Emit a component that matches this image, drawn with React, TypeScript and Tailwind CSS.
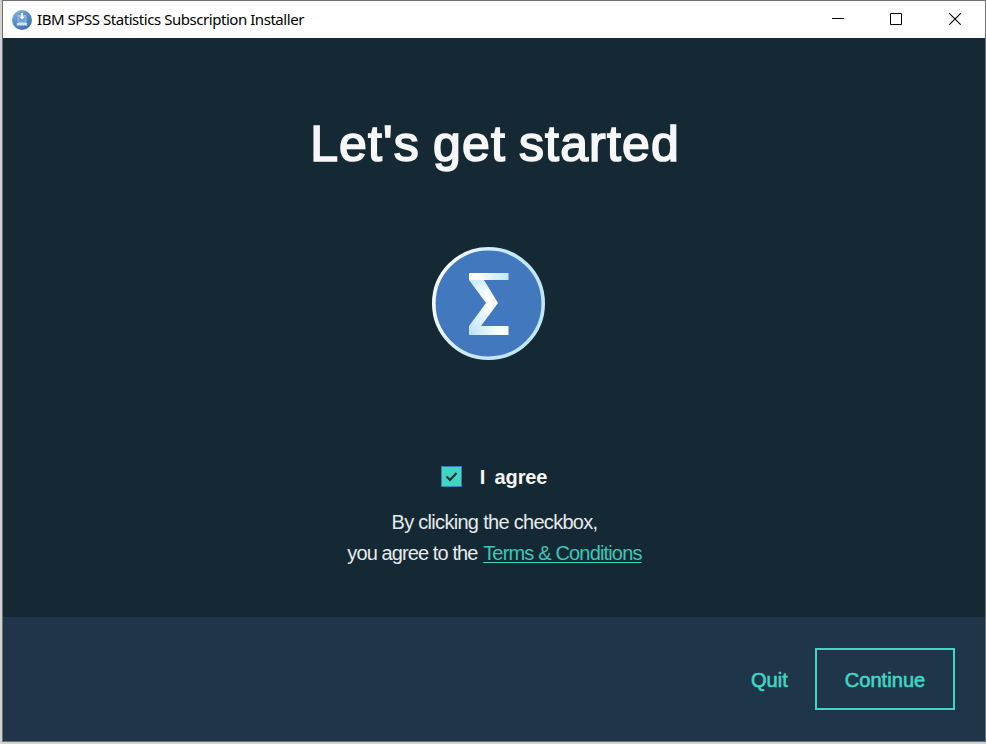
function InstallerIcon() {
  return (
    <svg width="20" height="20" viewBox="0 0 20 20" className="shrink-0">
      <defs>
        <linearGradient id="orb" x1="0" y1="0" x2="0.6" y2="1">
          <stop offset="0" stopColor="#9dc0e4" />
          <stop offset="0.45" stopColor="#5d92c9" />
          <stop offset="1" stopColor="#3b72b0" />
        </linearGradient>
      </defs>
      <circle cx="10" cy="10" r="10" fill="url(#orb)" />
      <path d="M6 5.500h8v7H6z" fill="#6f9fd0" stroke="#b4cee8" strokeWidth="0.8" />
      <path d="M4.800 13h10.400v2.500H4.800z" fill="#d0e0f1" />
      <path d="M9.200 3h1.800v3.500h2L10.100 9.500 7.200 6.500h2z" fill="#fff" />
    </svg>
  );
}

function SigmaLogo() {
  return (
    <svg width="113" height="113" viewBox="0 0 113 113" className="mt-[74px] mr-[11px] shrink-0">
      <defs>
        <linearGradient id="ring" x1="0" y1="0.25" x2="1" y2="0.6">
          <stop offset="0" stopColor="#fff" />
          <stop offset="0.5" stopColor="#c5e7ff" />
          <stop offset="1" stopColor="#c0e5ff" />
        </linearGradient>
        <linearGradient id="bar" x1="0" y1="0" x2="1" y2="0">
          <stop offset="0.2" stopColor="#fff" />
          <stop offset="1" stopColor="#bfe4ff" />
        </linearGradient>
        <linearGradient id="upper" x1="0" y1="0" x2="0.8" y2="1">
          <stop offset="0.1" stopColor="#c3e6ff" />
          <stop offset="0.8" stopColor="#fff" />
        </linearGradient>
        <linearGradient id="lower" x1="1" y1="0" x2="0.2" y2="1">
          <stop offset="0.2" stopColor="#fff" />
          <stop offset="1" stopColor="#c0e5ff" />
        </linearGradient>
        <linearGradient id="base" x1="0" y1="0" x2="1" y2="0">
          <stop offset="0" stopColor="#c0e5ff" />
          <stop offset="0.85" stopColor="#fff" />
        </linearGradient>
      </defs>
      <circle cx="56.5" cy="56.5" r="54.7" fill="#4178be" stroke="url(#ring)" strokeWidth="3.6" />
      <path d="M37 29h12.5L66 56H54L37 33z" fill="url(#upper)" />
      <path d="M37 26h39.5v7H37z" fill="url(#bar)" />
      <path d="M46 79h30.500v9H37z" fill="url(#base)" />
      <path d="M54 56h12L49 79l-7 9h-5V79z" fill="url(#lower)" />
    </svg>
  );
}

function TitleBar() {
  return (
    <header className="flex h-[37px] shrink-0 items-center bg-white pl-[9px]">
      <InstallerIcon />
      <h1 className="mb-[2px] ml-[5px] grow whitespace-nowrap font-['Noto_Sans',sans-serif] text-[15px] leading-5 tracking-[-0.45px] text-black">
        IBM SPSS Statistics Subscription Installer
      </h1>
      <svg width="12" height="12" viewBox="0 0 12 12" className="mr-[46px]" shapeRendering="crispEdges">
        <path d="M0 4h12v1H0z" />
      </svg>
      <svg width="12" height="12" viewBox="0 0 12 12" className="mr-[47px] mb-[2px]">
        <path d="M.5.5h11v11H.5z" fill="none" stroke="#000" />
      </svg>
      <svg width="12" height="12" viewBox="0 0 12 12" className="mr-[24px] mb-[2px]">
        <path d="M.3.3l11.400 11.400M11.700.3L.3 11.700" fill="none" stroke="#000" strokeWidth="1.1" />
      </svg>
    </header>
  );
}

export default function App() {
  return (
    <div className="h-[744px] w-[986px] overflow-hidden bg-[#d2d2d2] pb-[2px] pl-[2px] font-['Liberation_Sans',Arial,sans-serif]">
      <div className="flex h-[742px] w-[984px] flex-col border border-[#707070]">
        <TitleBar />
        <main className="flex h-[579px] shrink-0 flex-col items-center bg-[#152934] text-[#f7f7f7]">
          <h2 className="mt-[77px] ml-[2px] whitespace-nowrap text-[50px] leading-[58px] tracking-[1.15px] [word-spacing:-2px] [-webkit-text-stroke:1.7px_#f7f7f7]">
            Let's get started
          </h2>
          <SigmaLogo />
          <label className="mt-[102px] flex h-[30px] items-center whitespace-nowrap">
            <span className="mr-[18px] mb-[2px] flex size-[21px] items-center justify-center border border-[#4178be] bg-[#41d6c3]">
              <svg width="13" height="11" viewBox="0 0 13 11" fill="none" stroke="#152934" strokeWidth="2">
                <path d="M1.500 5.500l3.500 3.500 6.500-7" />
              </svg>
            </span>
            <span className="text-[20px] font-bold leading-6 tracking-[-0.15px] [word-spacing:4px]">I agree</span>
          </label>
          <div className="mt-[15px] ml-[1px] text-center text-[20px] leading-[31px] whitespace-nowrap text-[#e6eaec]">
            <p className="tracking-[-0.7px]">By clicking the checkbox,</p>
            <p className="tracking-[-0.9px]">
              you agree to the{" "}
              <a href="#" className="ml-[1px] tracking-[-0.83px] text-[#3cc7b7] underline decoration-[#41d6c3] decoration-1 underline-offset-2">
                Terms &amp; Conditions
              </a>
            </p>
          </div>
        </main>
        <footer className="flex grow items-center justify-end bg-[#1f364a] pr-[30px] text-[20px] text-[#41d6c3]">
          <button className="mr-[27px] pt-[2px] whitespace-nowrap tracking-[0.1px] [-webkit-text-stroke:0.6px_#41d6c3]">Quit</button>
          <button className="h-[62px] w-[140px] border-2 border-[#41d6c3] pt-[2px] whitespace-nowrap tracking-[0.05px] [-webkit-text-stroke:0.6px_#41d6c3]">
            Continue
          </button>
        </footer>
      </div>
    </div>
  );
}
